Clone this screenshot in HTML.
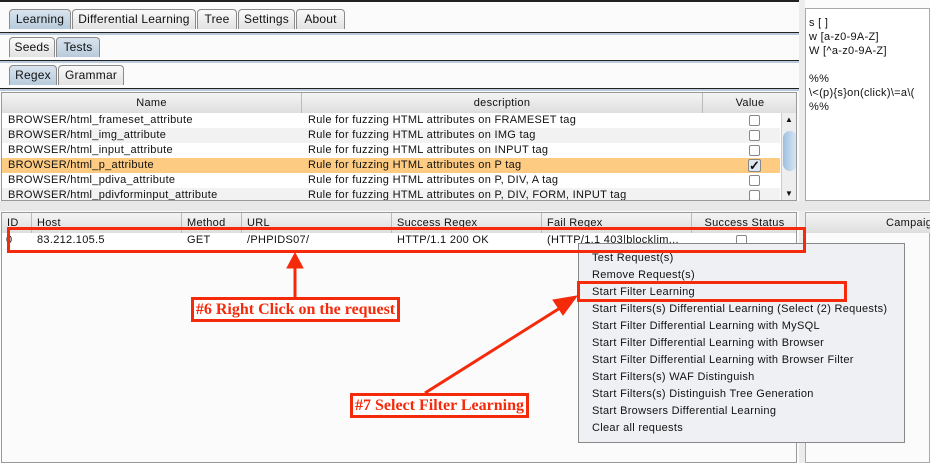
<!DOCTYPE html><html><head><style>
*{margin:0;padding:0;box-sizing:border-box}
body{width:930px;height:463px;overflow:hidden;background:#fbfbfb;font:11px "Liberation Sans",sans-serif;letter-spacing:.3px;color:#111;position:relative}
.a{position:absolute}
.tab{position:absolute;height:20px;border:1px solid #8a8a8a;border-bottom:none;border-radius:4px 4px 0 0;background:linear-gradient(#fafafa,#e2e2e2);text-align:center;line-height:19px;font-size:12px;letter-spacing:.2px}
.sel{background:linear-gradient(#d8e4ee,#b8cbdc)}
.hl{position:absolute;left:0;width:805px;height:3px;border-top:1px solid #222;background:#b9cadb}
.th{position:absolute;top:0;height:20px;border-right:1px solid #bbb;line-height:20px;text-align:center;background:linear-gradient(#f4f4f4,#dedede)}
.row{position:absolute;left:0;height:15px;line-height:15px;white-space:nowrap}
.cb{position:absolute;left:747px;width:11px;height:11px;border:1px solid #888;border-radius:2px;background:#fff}
.mi{position:absolute;left:13px;font-size:11px}
.red{position:absolute;border:3px solid #f52a0a}
.lbl{position:absolute;border:3px solid #f52a0a;background:#fff;color:#f52a0a;font:bold 16px "Liberation Serif",serif;letter-spacing:0;text-align:center;line-height:19px}
</style></head><body>
<div class="a" style="left:0;top:0;width:805px;height:2px;background:#222"></div>
<div class="tab sel" style="left:9px;top:9px;width:62px">Learning</div>
<div class="tab" style="left:72px;top:9px;width:124px">Differential Learning</div>
<div class="tab" style="left:197px;top:9px;width:40px">Tree</div>
<div class="tab" style="left:238px;top:9px;width:57px">Settings</div>
<div class="tab" style="left:296px;top:9px;width:49px">About</div>
<div class="hl" style="top:32px"></div>
<div class="tab" style="left:9px;top:37px;width:46px">Seeds</div>
<div class="tab sel" style="left:56px;top:37px;width:44px">Tests</div>
<div class="hl" style="top:60px"></div>
<div class="tab sel" style="left:9px;top:65px;width:48px">Regex</div>
<div class="tab" style="left:58px;top:65px;width:66px">Grammar</div>
<div class="hl" style="top:88px"></div>
<div class="a" style="left:1px;top:92px;width:796px;height:109px;border:1px solid #999;background:#fff;overflow:hidden">
<div class="th" style="left:0;width:300px">Name</div>
<div class="th" style="left:300px;width:401px">description</div>
<div class="th" style="left:701px;width:95px">Value</div>
<div class="row" style="top:20px;width:778px"><span class="a" style="left:6px">BROWSER/html_frameset_attribute</span><span class="a" style="left:306px">Rule for fuzzing HTML attributes on FRAMESET tag</span></div>
<div class="row" style="top:35px;width:778px;background:#f2f2f2"><span class="a" style="left:6px">BROWSER/html_img_attribute</span><span class="a" style="left:306px">Rule for fuzzing HTML attributes on IMG tag</span></div>
<div class="row" style="top:50px;width:778px"><span class="a" style="left:6px">BROWSER/html_input_attribute</span><span class="a" style="left:306px">Rule for fuzzing HTML attributes on INPUT tag</span></div>
<div class="row" style="top:65px;width:778px;background:#fdcc82"><span class="a" style="left:6px">BROWSER/html_p_attribute</span><span class="a" style="left:306px">Rule for fuzzing HTML attributes on P tag</span></div>
<div class="row" style="top:80px;width:778px"><span class="a" style="left:6px">BROWSER/html_pdiva_attribute</span><span class="a" style="left:306px">Rule for fuzzing HTML attributes on P, DIV, A tag</span></div>
<div class="row" style="top:95px;width:778px;background:#f2f2f2"><span class="a" style="left:6px">BROWSER/html_pdivforminput_attribute</span><span class="a" style="left:306px">Rule for fuzzing HTML attributes on P, DIV, FORM, INPUT tag</span></div>
<div class="cb" style="top:22px"></div><div class="cb" style="top:37px"></div><div class="cb" style="top:52px"></div>
<div class="cb" style="top:66px;width:13px;height:13px;left:746px;background:#dfe8f2;font-size:13px;line-height:11px;text-align:center;font-weight:bold">✓</div>
<div class="cb" style="top:82px"></div><div class="cb" style="top:97px"></div>
<div class="a" style="left:779px;top:20px;width:16px;height:88px;background:#eee;border-left:1px solid #ccc"><div class="a" style="left:1px;top:18px;width:14px;height:40px;border-radius:7px;background:linear-gradient(90deg,#9fbfe0,#dbe9f6)"></div><div class="a" style="left:3px;top:2px;font-size:8px">▲</div><div class="a" style="left:3px;top:76px;font-size:8px">▼</div></div>
</div>
<div class="a" style="left:799px;top:0;width:6px;height:463px;background:#ececec"></div>
<div class="a" style="left:805px;top:8px;width:125px;height:193px;border:1px solid #aaa;background:#fff;padding:7px 3px;line-height:14px;white-space:pre;overflow:hidden">s [ ]
w [a-z0-9A-Z]
W [^a-z0-9A-Z]

%%
\&lt;(p){s}on(click)\=a\(
%%</div>
<div class="a" style="left:0;top:201px;width:930px;height:10px;background:#e8e8e8"></div>
<div class="a" style="left:1px;top:212px;width:796px;height:251px;border:1px solid #999;background:#fbfbfb;overflow:hidden">
<div class="th" style="left:0;width:30px;text-align:left;padding-left:5px">ID</div>
<div class="th" style="left:30px;width:150px;text-align:left;padding-left:5px">Host</div>
<div class="th" style="left:180px;width:60px;text-align:left;padding-left:5px">Method</div>
<div class="th" style="left:240px;width:150px;text-align:left;padding-left:5px">URL</div>
<div class="th" style="left:390px;width:150px;text-align:left;padding-left:5px">Success Regex</div>
<div class="th" style="left:540px;width:150px;text-align:left;padding-left:5px">Fail Regex</div>
<div class="th" style="left:690px;width:106px">Success Status</div>
<div class="row" style="top:20px;width:796px;background:#fff;height:16px"><span class="a" style="left:4px">0</span><span class="a" style="left:35px">83.212.105.5</span><span class="a" style="left:185px">GET</span><span class="a" style="left:245px">/PHPIDS07/</span><span class="a" style="left:395px">HTTP/1.1 200 OK</span><span class="a" style="left:545px">(HTTP/1.1 403|block|im...</span></div>
<div class="cb" style="left:734px;top:22px"></div>
</div>
<div class="a" style="left:805px;top:212px;width:125px;height:251px;border:1px solid #aaa;background:#fbfbfb"><div class="th" style="left:0;width:125px;text-align:left;padding-left:80px">Campaign</div></div>
<div class="a" style="left:578px;top:243px;width:327px;height:200px;border:1px solid #888;background:#eff0f3">
<div class="mi" style="top:8px">Test Request(s)</div>
<div class="mi" style="top:25px">Remove Request(s)</div>
<div class="mi" style="top:42px">Start Filter Learning</div>
<div class="mi" style="top:59px">Start Filters(s) Differential Learning (Select (2) Requests)</div>
<div class="mi" style="top:76px">Start Filter Differential Learning with MySQL</div>
<div class="mi" style="top:93px">Start Filter Differential Learning with Browser</div>
<div class="mi" style="top:110px">Start Filter Differential Learning with Browser Filter</div>
<div class="mi" style="top:127px">Start Filters(s) WAF Distinguish</div>
<div class="mi" style="top:144px">Start Filters(s) Distinguish Tree Generation</div>
<div class="mi" style="top:161px">Start Browsers Differential Learning</div>
<div class="mi" style="top:178px">Clear all requests</div>
</div>
<div class="red" style="left:7px;top:227px;width:799px;height:26px"></div>
<div class="red" style="left:577px;top:281px;width:270px;height:21px"></div>
<svg class="a" style="left:0;top:0" width="930" height="463"><g fill="#f52a0a" stroke="#f52a0a"><line x1="295" y1="297" x2="295" y2="265" stroke-width="3"/><polygon points="287,268 303,268 295,253"/><line x1="425" y1="393" x2="560" y2="308" stroke-width="3"/><polygon points="553,300 563,315 577,296"/></g></svg>
<div class="lbl" style="left:191px;top:297px;width:209px;height:25px">#6 Right Click on the request</div>
<div class="lbl" style="left:350px;top:393px;width:179px;height:25px">#7 Select Filter Learning</div>
</body></html>
